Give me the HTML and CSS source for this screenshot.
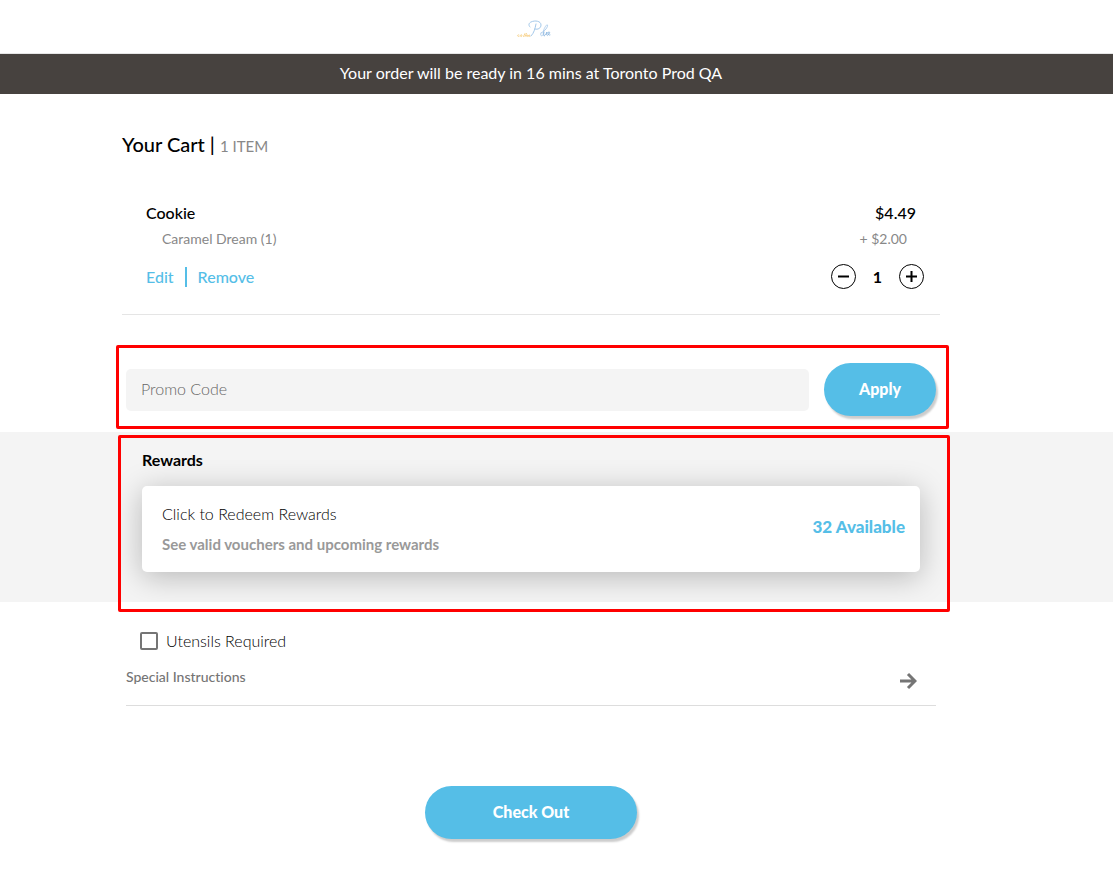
FILE: index.html
```html
<!DOCTYPE html>
<html lang="en">
<head>
  <meta charset="UTF-8" />
  <meta name="viewport" content="width=device-width, initial-scale=1.0" />
  <title>Your Cart</title>
  <link rel="stylesheet" href="styles.css">
</head>
<body>
  <header class="header">
    <svg class="logo" width="36" height="22" viewBox="0 0 36 22" fill="none" stroke-linecap="round" stroke-linejoin="round" role="img" aria-label="Logo">
      <path d="M3 16c-2-1-2 2 0 1.500M5 16c-1 .5-.5 2 .5 1.500s.5-2-.5-1.500M7.500 17.500l1.500-3M9 17.500l1.500-3M10.500 17c1.500 0 1.500-1.500.5-1s0 2 1 1.300M12.500 17c1.500 0 1.500-1.500.5-1s0 2 1 1.300" stroke="#f9d590" />
      <path d="M14 8c-2-2-1-4 1-5 4-2 10-1 10 3 0 3-3 5-6 4M20 5c-1 5-2 9-5 12" stroke="#a3c8ea" />
      <path d="M25 14c4-2 7-6 6.500-8-.5-1-3 2-4 6-.5 3-.5 5 1 5M25 14c-1 2 0 4 2 2" stroke="#b2d0ee" />
      <path d="M28 13c-1 3 0 5 2 2l1-2c-1 3 0 4 1 3 2-2 2-3 1-3-2 0-1 4 1 3" stroke="#93bbe2" />
    </svg>
  </header>
  <div class="banner">Your order will be ready in 16 mins at Toronto Prod QA</div>

  <main>
    <div class="wrap">
      <h1 class="cart-title">Your Cart | <span class="cart-count">1 ITEM</span></h1>

      <section class="cart-item">
        <div class="row item-name"><span>Cookie</span><span>$4.49</span></div>
        <div class="row item-option"><span>Caramel Dream (1)</span><span>+ $2.00</span></div>
        <div class="row item-actions">
          <div class="links">
            <a href="#">Edit</a>
            <a href="#">Remove</a>
          </div>
          <div class="quantity">
            <button type="button" class="qty-btn" aria-label="Decrease quantity">
              <svg width="11" height="11" viewBox="0 0 11 11" stroke="#000" stroke-width="2"><path d="M0 5.500h11" /></svg>
            </button>
            <span>1</span>
            <button type="button" class="qty-btn" aria-label="Increase quantity">
              <svg width="11" height="11" viewBox="0 0 11 11" stroke="#000" stroke-width="2"><path d="M0 5.500h11M5.500 0v11" /></svg>
            </button>
          </div>
        </div>
      </section>

      <form class="promo">
        <input type="text" class="promo-input" name="promo" placeholder="Promo Code" aria-label="Promo Code" />
        <button type="submit" class="btn btn-apply">Apply</button>
      </form>
    </div>

    <section class="rewards">
      <div class="wrap">
        <div class="rewards-frame">
          <div class="rewards-inner">
            <h2 class="rewards-title">Rewards</h2>
            <a href="#" class="rewards-card">
              <span class="rewards-text">
                <span class="rewards-head">Click to Redeem Rewards</span>
                <span class="rewards-sub">See valid vouchers and upcoming rewards</span>
              </span>
              <span class="rewards-available">32 Available</span>
            </a>
          </div>
        </div>
      </div>
    </section>

    <div class="wrap">
      <label class="utensils" for="utensils">
        <input type="checkbox" id="utensils" name="utensils" />
        Utensils Required
      </label>
      <button type="button" class="instructions">
        Special Instructions
        <svg width="18" height="18" viewBox="0 0 18 18" fill="none" stroke="#757575" stroke-width="3"><path d="M1 9h14M9 2l7 7-7 7" /></svg>
      </button>
      <button type="button" class="btn btn-checkout">Check Out</button>
    </div>
  </main>
</body>
</html>
```
FILE: styles.css
```css
* {
  box-sizing: border-box;
}
body {
  margin: 0;
  font-family: Lato, "Liberation Sans", sans-serif;
  font-size: 16px;
  line-height: 20px;
  font-variant-ligatures: none;
  color: #000;
  background-color: #fff;
}
button, input {
  font-family: inherit;
  font-variant-ligatures: inherit;
}
a {
  text-decoration: none;
}
.header, .banner, main {
  padding-right: 51px;
}
.header {
  display: flex;
  justify-content: center;
  align-items: center;
  height: 54px;
  padding-top: 6px;
  border-bottom: 1px solid #e6e6e6;
}
.logo {
  margin-left: 6px;
}
.banner {
  padding-top: 9px;
  padding-bottom: 11px;
  background-color: #47423f;
  color: #fff;
  text-align: center;
}
.wrap {
  max-width: 818px;
  margin: 0 auto;
}
.cart-title {
  margin: 0;
  padding-top: 36px;
  font-size: 20px;
  line-height: 28px;
  font-weight: 500;
}
.cart-count {
  font-size: 15px;
  font-weight: 400;
  color: #888;
}
.row {
  display: flex;
  justify-content: space-between;
  align-items: center;
}
.cart-item {
  padding: 43px 16px 25px 24px;
  border-bottom: 1px solid #e5e5e5;
}
.item-name {
  padding-right: 8px;
  font-weight: 500;
}
.item-option {
  padding: 6px 17px 6px 16px;
  font-size: 14px;
  color: #888;
}
.item-actions {
  margin-top: 9px;
}
.links {
  display: flex;
}
.links a {
  color: #55bee7;
  font-weight: 500;
}
.links a + a {
  margin-left: 11px;
  padding-left: 11px;
  border-left: 2px solid #55bee7;
}
.quantity {
  display: flex;
  align-items: center;
  gap: 17px;
  font-weight: 700;
}
.qty-btn {
  display: flex;
  justify-content: center;
  align-items: center;
  width: 25px;
  height: 25px;
  padding: 0;
  border: 1px solid #000;
  border-radius: 50%;
  background: none;
  cursor: pointer;
}
.promo {
  display: flex;
  align-items: center;
  gap: 15px;
  margin: 30px -9px 3px -6px;
  padding: 15px 10px 10px 7px;
  border: 3px solid #f00;
  border-radius: 2px;
}
.promo-input {
  flex: 1;
  height: 42px;
  padding: 0 15px 2px;
  border: none;
  border-radius: 5px;
  background-color: #f4f4f4;
  font-size: 16px;
  font-weight: 300;
}
.promo-input::placeholder {
  color: #666;
}
.btn {
  height: 53px;
  padding-bottom: 4px;
  border: none;
  border-radius: 27px;
  background-color: #55bee7;
  box-shadow: 2px 3px 2px rgba(0, 0, 0, 0.2);
  color: #fff;
  font-size: 16px;
  font-weight: 900;
  cursor: pointer;
}
.btn-apply {
  width: 112px;
}
/* the grey band runs the full width of the window */
.rewards {
  margin-right: -51px;
  padding-right: 51px;
  background-color: #f4f4f4;
}
.rewards-frame {
  position: relative;
  margin: 0 -10px 0 -4px;
}
.rewards-frame::after {
  content: "";
  position: absolute;
  top: 3px;
  left: 0;
  right: 0;
  bottom: -10px;
  border: 3px solid #f00;
  border-radius: 2px;
  pointer-events: none;
}
.rewards-inner {
  padding: 18px 30px 30px 24px;
  overflow: hidden;
}
.rewards-title {
  margin: 0 0 16px;
  font-size: 16px;
  line-height: 20px;
  font-weight: 700;
}
.rewards-card {
  display: flex;
  justify-content: space-between;
  align-items: center;
  padding: 13px 15px 13px 20px;
  border-radius: 5px;
  background-color: #fff;
  box-shadow: 0 5px 30px rgba(0, 0, 0, 0.25);
}
.rewards-text {
  display: flex;
  flex-direction: column;
  line-height: 30px;
}
.rewards-head {
  font-weight: 300;
  color: #000;
}
.rewards-sub {
  font-size: 15px;
  font-weight: 700;
  color: #999;
}
.rewards-available {
  padding-bottom: 4px;
  font-size: 17px;
  font-weight: 900;
  color: #55bee7;
}
.utensils {
  display: flex;
  align-items: center;
  gap: 8px;
  padding: 29px 18px 0;
  font-weight: 300;
}
.utensils input {
  appearance: none;
  width: 18px;
  height: 18px;
  margin: 0;
  border: 2px solid #757575;
  border-radius: 2px;
}
.instructions {
  display: flex;
  justify-content: space-between;
  align-items: flex-start;
  width: calc(100% - 8px);
  margin: 16px 4px 80px;
  padding: 0 19px 15px 0;
  border: none;
  border-bottom: 1px solid #ddd;
  background: none;
  font-size: 14px;
  line-height: 20px;
  font-weight: 500;
  color: #757575;
  cursor: pointer;
}
.instructions svg {
  margin-top: 5px;
}
.btn-checkout {
  display: block;
  width: 212px;
  margin: 0 auto 55px;
}
```
